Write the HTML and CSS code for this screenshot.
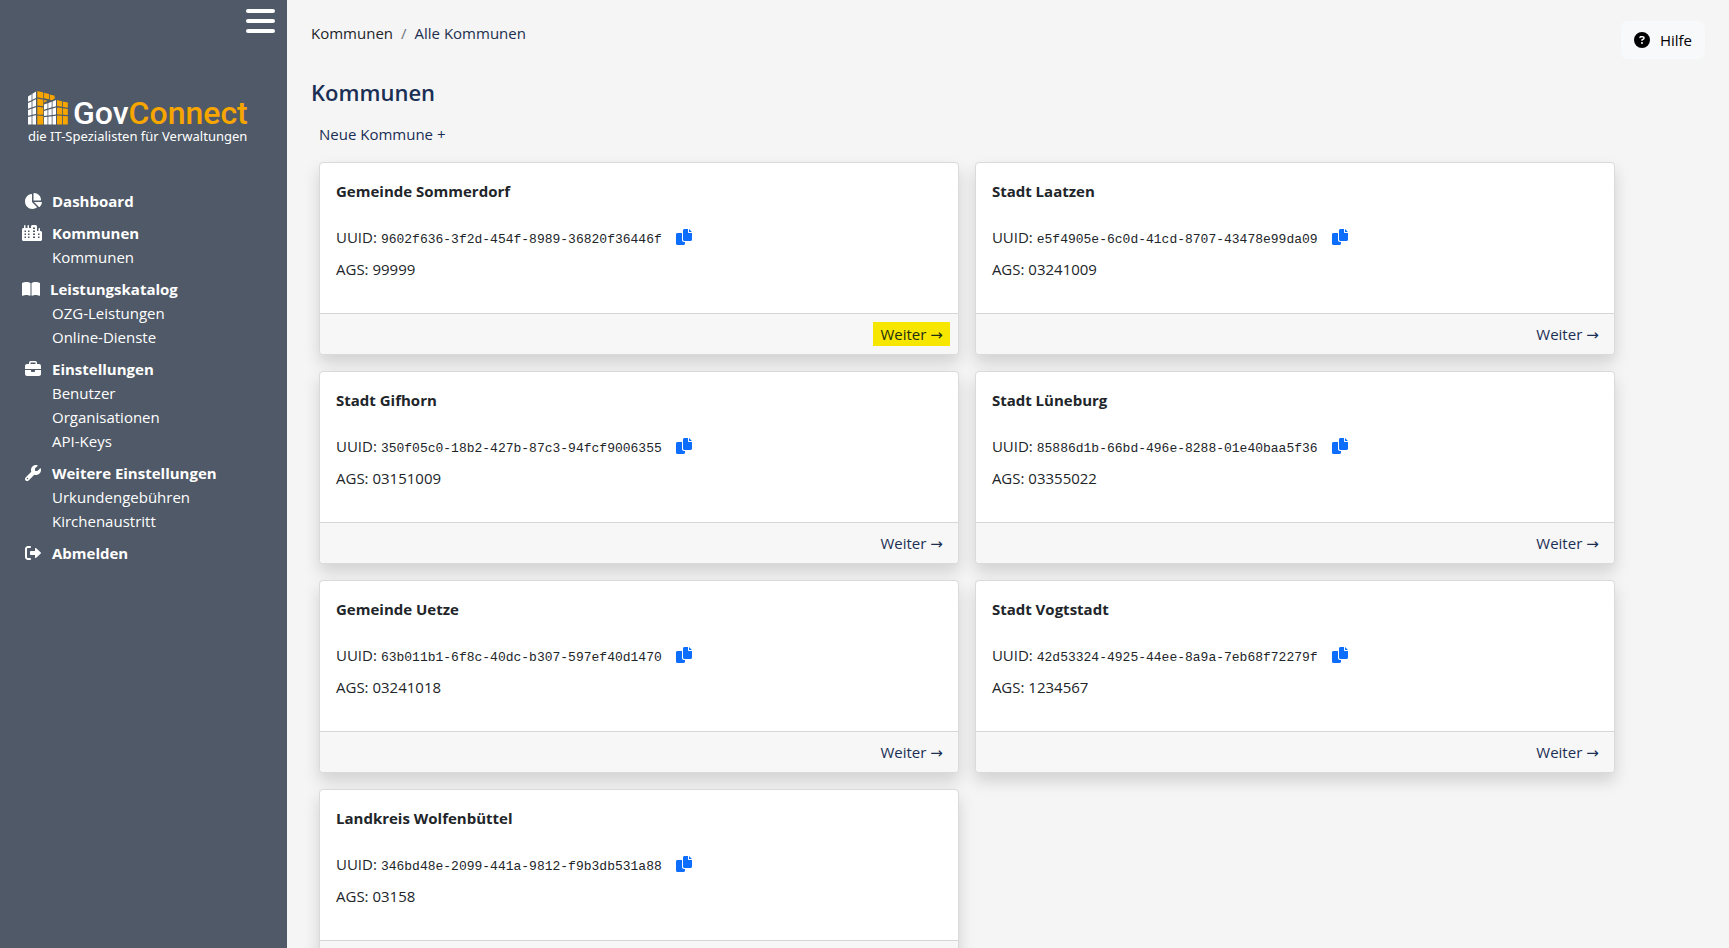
FILE: index.html
```html
<!DOCTYPE html>
<html lang="de">
<head>
<meta charset="utf-8">
<title>Kommunen</title>
<link rel="stylesheet" href="styles.css">
</head>
<body>
<svg class="sprite" aria-hidden="true">
  <symbol id="copy" viewBox="0 0 512 512"><path d="M384 96L384 0h-112c-26.510 0-48 21.490-48 48v288c0 26.510 21.490 48 48 48H464c26.510 0 48-21.490 48-48V128h-95.100C398.400 128 384 113.600 384 96zM416 0v96h96L416 0zM192 352V128h-144c-26.510 0-48 21.490-48 48v288c0 26.510 21.490 48 48 48h192c26.510 0 48-21.490 48-48L288 416h-32C220.700 416 192 387.300 192 352z"/></symbol>
</svg>
<aside class="sidebar">
  <button class="menu-toggle" type="button" aria-label="Menü"><span></span><span></span><span></span></button>
  <svg class="logo" viewBox="0 0 220 56" role="img" aria-label="GovConnect">
    <g fill="#fff">
      <path d="M0 5.500l3.600-2.300v6L0 10.800zM4.400 2.700L8 .4v6.700L4.400 8.800zM0 12l3.600-1.600v6L0 17.800zM4.400 10L8 8.300v6.700l-3.600 1.200zM0 19l3.600-1.300v6.200L0 24.800zM4.400 17.400L8 16.200v6.900l-3.600.7zM0 26l3.600-.8v8.300H0zM4.400 25L8 24.300v9.200H4.400z"/>
      <path d="M16 13.500l3.500-1.200v5.300L16 18.800zM20.300 12l3.400-1.200v5.500l-3.400 1.100zM24.500 10.500L28 9v6.200l-3.500 1zM16 20l3.500-1v5.600l-3.500.5zM20.300 18.700l3.400-1v6.400l-3.400.5zM24.500 17.400L28 16.400v7.200l-3.500.5zM16 26.200l3.500-.4v7.700H16zM20.300 25.700l3.400-.4v8.200h-3.400zM24.500 25.200l3.500-.4v8.700h-3.500z"/>
    </g>
    <g fill="#f7a600">
      <path d="M9.300 0l6 1.600v5.800l-6-1.200zM16.100 1.800l4.900 1.300v5.200l-4.900-1zM21.800 3.400l4.900 1.300v3.100l-3 1.400-1.900-.4zM9.300 7.600l6 1.200v6.400l-6-.8zM16.100 9l3.500.7-3.500 2zM9.300 15.800l6 .8v7.200l-6-.4zM9.300 24.600l6 .3v8.600h-6z"/>
      <path d="M29 9l5 1.200v5.600l-5-.8zM34.800 10.400l5 1.200v5.200l-5-.9zM29 16.400l5 .7v6.600l-5-.4zM34.800 17.300l5 .7v6.100l-5-.3zM29 24.500l5 .3v8.700h-5zM34.800 24.900l5 .3v8.300h-5z"/>
    </g>
    <text class="logo-name" x="45" y="33">Gov<tspan class="logo-accent">Connect</tspan></text>
    <text class="logo-claim" x="0" y="50">die IT-Spezialisten für Verwaltungen</text>
  </svg>
  <nav class="nav">
    <div class="group">
      <a class="head" href="#"><svg class="icon" viewBox="0 0 576 512"><path d="M304 240V16.600c0-9 7-16.600 16-16.600C443.700 0 544 100.300 544 224c0 9-7.600 16-16.600 16H304zM32 272C32 150.700 122.100 50.300 239 34.300c9.200-1.300 17 6.100 17 15.400V288L412.500 444.500c6.700 6.700 6.200 17.700-1.500 23.100C371.800 495.600 323.800 512 272 512C139.500 512 32 404.600 32 272zm526.400 16c9.300 0 16.600 7.800 15.400 17c-7.700 55.900-34.600 105.600-73.900 142.300c-6 5.600-15.400 5.200-21.200-.7L320 288H558.400z"/></svg>Dashboard</a>
    </div>
    <div class="group">
      <a class="head head-city" href="#"><svg class="icon icon-wide" viewBox="0 0 640 512"><path fill-rule="evenodd" d="M64 24a24 24 0 0 1 48 0v72h64V24a24 24 0 0 1 48 0v72h64V48c0-26 22-48 48-48h96c26 0 48 22 48 48v144h48v-72a24 24 0 0 1 48 0v72h16c26 0 48 22 48 48v224c0 26-22 48-48 48H48c-26 0-48-22-48-48V144c0-26 22-48 48-48h16zM80 176v48h48v-48zm112 0v48h48v-48zm160-96v48h64V80zm0 96v48h64v-48zM80 272v48h48v-48zm112 0v48h48v-48zm160 0v48h64v-48zm160 0v48h48v-48zM80 368v48h48v-48zm112 0v48h48v-48zm160 0v48h64v-48zm160 0v48h48v-48z"/></svg>Kommunen</a>
      <a href="#">Kommunen</a>
    </div>
    <div class="group">
      <a class="head head-book" href="#"><svg class="icon" viewBox="0 0 576 512"><path d="M249.600 471.500c10.800 3.800 22.400-4.100 22.400-15.500V78.600c0-4.200-1.600-8.400-5-11C247.400 52 202.400 32 144 32C93.500 32 46.300 45.300 18.100 56.100C6.800 60.500 0 71.700 0 83.800V454.100c0 11.900 12.800 20.200 24.100 16.500C55.600 460.100 105.500 448 144 448c33.900 0 79 14 105.600 23.500zm76.800 0C353 462 398.100 448 432 448c38.500 0 88.400 12.100 119.900 22.600c11.300 3.800 24.100-4.600 24.100-16.500V83.800c0-12.100-6.800-23.300-18.100-27.600C529.700 45.300 482.500 32 432 32c-58.400 0-103.400 20-123 35.600c-3.300 2.600-5 6.800-5 11V456c0 11.400 11.700 19.300 22.400 15.500z"/></svg>Leistungskatalog</a>
      <a href="#">OZG-Leistungen</a>
      <a href="#">Online-Dienste</a>
    </div>
    <div class="group">
      <a class="head" href="#"><svg class="icon" viewBox="0 0 512 512"><path d="M184 48H328c4.400 0 8 3.600 8 8V96H176V56c0-4.400 3.600-8 8-8zm-56 8V96H64C28.700 96 0 124.700 0 160v96H192 320 512V160c0-35.300-28.700-64-64-64H384V56c0-30.900-25.100-56-56-56H184c-30.900 0-56 25.100-56 56zM512 288H320v32c0 17.700-14.300 32-32 32H224c-17.700 0-32-14.300-32-32V288H0V416c0 35.300 28.700 64 64 64H448c35.300 0 64-28.700 64-64V288z"/></svg>Einstellungen</a>
      <a href="#">Benutzer</a>
      <a href="#">Organisationen</a>
      <a href="#">API-Keys</a>
    </div>
    <div class="group">
      <a class="head" href="#"><svg class="icon" viewBox="0 0 512 512"><path d="M352 320c88.400 0 160-71.600 160-160c0-15.300-2.200-30.100-6.200-44.200c-3.100-10.800-16.400-13.200-24.300-5.300l-76.800 76.800c-3 3-7.100 4.700-11.300 4.700H336c-8.800 0-16-7.200-16-16V118.600c0-4.200 1.700-8.300 4.700-11.300l76.800-76.800c7.900-7.900 5.400-21.200-5.300-24.300C382.100 2.200 367.300 0 352 0C263.600 0 192 71.600 192 160c0 19.100 3.400 37.500 9.500 54.500L19.900 396.100C7.200 408.800 0 426.100 0 444.100C0 481.600 30.400 512 67.900 512c18 0 35.300-7.200 48-19.900L297.500 310.500c17 6.200 35.400 9.500 54.500 9.500zM80 408a24 24 0 1 1 0 48 24 24 0 1 1 0-48z"/></svg>Weitere Einstellungen</a>
      <a href="#">Urkundengebühren</a>
      <a href="#">Kirchenaustritt</a>
    </div>
    <div class="group">
      <a class="head" href="#"><svg class="icon" viewBox="0 0 512 512"><path d="M160 96c17.700 0 32-14.300 32-32s-14.300-32-32-32H96C43 32 0 75 0 128V384c0 53 43 96 96 96h64c17.700 0 32-14.300 32-32s-14.300-32-32-32H96c-17.700 0-32-14.300-32-32V128c0-17.700 14.300-32 32-32h64zM504.500 273.400c4.800-4.500 7.500-10.800 7.500-17.400s-2.700-12.900-7.500-17.400l-144-136c-7-6.600-17.200-8.400-26-4.600s-14.500 12.500-14.500 22v72H192c-17.700 0-32 14.300-32 32v64c0 17.700 14.300 32 32 32H320v72c0 9.600 5.700 18.200 14.500 22s19 2 26-4.600l144-136z"/></svg>Abmelden</a>
    </div>
  </nav>
</aside>
<main class="main">
  <header class="top">
    <nav class="crumbs" aria-label="Brotkrumen"><a href="#">Kommunen</a><span class="slash">/</span><span>Alle Kommunen</span></nav>
    <button class="help" type="button"><svg class="help-icon" viewBox="0 0 512 512"><path d="M256 512A256 256 0 1 0 256 0a256 256 0 1 0 0 512zM169.800 165.300c7.900-22.300 29.100-37.300 52.800-37.300h58.300c34.900 0 63.100 28.300 63.100 63.100c0 22.600-12.100 43.500-31.700 54.800L280 264.400c-.2 13-10.900 23.600-24 23.600c-13.300 0-24-10.700-24-24V250.500c0-8.600 4.600-16.500 12.100-20.800l44.300-25.400c4.700-2.700 7.600-7.700 7.600-13.100c0-8.400-6.800-15.100-15.100-15.100H222.600c-3.400 0-6.400 2.100-7.500 5.300l-.4 1.200c-4.400 12.500-18.200 19-30.600 14.600s-19-18.200-14.600-30.600l.4-1.200zM224 352a32 32 0 1 1 64 0 32 32 0 1 1-64 0z"/></svg>Hilfe</button>
  </header>
  <h1 class="title">Kommunen</h1>
  <a class="new" href="#">Neue Kommune +</a>
  <div class="cards">
    <article class="card"><div class="body"><h2>Gemeinde Sommerdorf</h2><p>UUID: <code>9602f636-3f2d-454f-8989-36820f36446f</code><button class="copy" type="button" aria-label="Kopieren"><svg><use href="#copy"/></svg></button></p><p>AGS: 99999</p></div><div class="foot"><a class="marked" href="#">Weiter →</a></div></article>
    <article class="card"><div class="body"><h2>Stadt Laatzen</h2><p>UUID: <code>e5f4905e-6c0d-41cd-8707-43478e99da09</code><button class="copy" type="button" aria-label="Kopieren"><svg><use href="#copy"/></svg></button></p><p>AGS: 03241009</p></div><div class="foot"><a href="#">Weiter →</a></div></article>
    <article class="card"><div class="body"><h2>Stadt Gifhorn</h2><p>UUID: <code>350f05c0-18b2-427b-87c3-94fcf9006355</code><button class="copy" type="button" aria-label="Kopieren"><svg><use href="#copy"/></svg></button></p><p>AGS: 03151009</p></div><div class="foot"><a href="#">Weiter →</a></div></article>
    <article class="card"><div class="body"><h2>Stadt Lüneburg</h2><p>UUID: <code>85886d1b-66bd-496e-8288-01e40baa5f36</code><button class="copy" type="button" aria-label="Kopieren"><svg><use href="#copy"/></svg></button></p><p>AGS: 03355022</p></div><div class="foot"><a href="#">Weiter →</a></div></article>
    <article class="card"><div class="body"><h2>Gemeinde Uetze</h2><p>UUID: <code>63b011b1-6f8c-40dc-b307-597ef40d1470</code><button class="copy" type="button" aria-label="Kopieren"><svg><use href="#copy"/></svg></button></p><p>AGS: 03241018</p></div><div class="foot"><a href="#">Weiter →</a></div></article>
    <article class="card"><div class="body"><h2>Stadt Vogtstadt</h2><p>UUID: <code>42d53324-4925-44ee-8a9a-7eb68f72279f</code><button class="copy" type="button" aria-label="Kopieren"><svg><use href="#copy"/></svg></button></p><p>AGS: 1234567</p></div><div class="foot"><a href="#">Weiter →</a></div></article>
    <article class="card"><div class="body"><h2>Landkreis Wolfenbüttel</h2><p>UUID: <code>346bd48e-2099-441a-9812-f9b3db531a88</code><button class="copy" type="button" aria-label="Kopieren"><svg><use href="#copy"/></svg></button></p><p>AGS: 03158</p></div><div class="foot"><a href="#">Weiter →</a></div></article>
  </div>
</main>
</body>
</html>
```
FILE: styles.css
```css
* { box-sizing: border-box; }
body {
  margin: 0;
  display: flex;
  height: 100vh;
  overflow: hidden;
  background: #f5f5f5;
  color: #212529;
  font: 15px/24px "Open Sans", "DejaVu Sans", sans-serif;
}
a { color: inherit; text-decoration: none; }
button { font: inherit; border: 0; padding: 0; background: none; cursor: pointer; }
h1, h2, p { margin: 0; }
.sprite { display: none; }

.sidebar {
  flex: 0 0 287px;
  display: flex;
  flex-direction: column;
  padding: 9px 12px 0 24px;
  background: #4f5967;
  color: #fff;
}
.menu-toggle { display: flex; flex-direction: column; gap: 6px; width: 29px; align-self: flex-end; }
.menu-toggle span { height: 4px; border-radius: 2px; background: #fff; }
.logo { width: 220px; height: 56px; margin: 58px 0 42px 4px; overflow: visible; }
.logo-name { font: 500 32px Roboto, sans-serif; fill: #fff; }
.logo-accent { fill: #f7a600; }
.logo-claim { font: 13px "Noto Sans", sans-serif; fill: #fff; }

.nav { display: flex; flex-direction: column; gap: 8px; }
.group { display: flex; flex-direction: column; }
.group a { padding-left: 28px; }
.group .head { display: flex; align-items: center; gap: 10px; padding-left: 0; font-weight: 700; }
.icon { width: 18px; height: 16px; fill: currentColor; }
.icon-wide { width: 20px; }
.group .head-city,
.group .head-book { margin-left: -2px; }

.main { flex: 1; min-width: 0; padding: 21px 24px 0; overflow: hidden; }
.top { display: flex; justify-content: space-between; align-items: flex-start; }
.crumbs { display: flex; gap: 8px; color: #212f4f; }
.crumbs a { color: #212529; }
.slash { color: #6c757d; }
.help {
  display: flex;
  align-items: center;
  gap: 10px;
  height: 38px;
  padding: 0 13px;
  border-radius: 6px;
  background: #f8f9fa;
  color: #000;
}
.help-icon { width: 16px; height: 16px; }
.title { margin-top: 19px; color: #1b2f55; font-size: 22px; line-height: 28px; font-weight: 600; }
.new { display: inline-block; margin: 16px 0 0 8px; color: #1b2f55; }

.cards {
  display: grid;
  grid-template-columns: 1fr 1fr;
  gap: 16px;
  width: 94.1%;
  padding: 16px 8px;
}
.card {
  display: flex;
  flex-direction: column;
  min-width: 0;
  border: 1px solid #dadada;
  border-radius: 4px;
  background: #fff;
  box-shadow: 0 8px 16px rgba(0, 0, 0, .15);
}
.body { padding: 16px 16px 32px; }
.body h2 { margin-bottom: 22px; font-size: 15px; line-height: 24px; font-weight: 700; }
.body p { display: flex; align-items: baseline; gap: 4px; height: 24px; white-space: nowrap; }
.body p + p { margin-top: 8px; }
.body code { font: 13px/20px "Liberation Mono", monospace; }
.copy { display: flex; align-self: center; margin-left: 10px; color: #0d6efd; }
.copy svg { width: 16px; height: 16px; fill: currentColor; }
.foot { display: flex; justify-content: flex-end; padding: 8px; border-top: 1px solid #d6d6d6; background: #f7f7f7; border-radius: 0 0 4px 4px; color: #1b2f55; }
.foot a { padding: 0 7px; }
.foot .marked { background: #f7e600; color: #212f10; }
```
